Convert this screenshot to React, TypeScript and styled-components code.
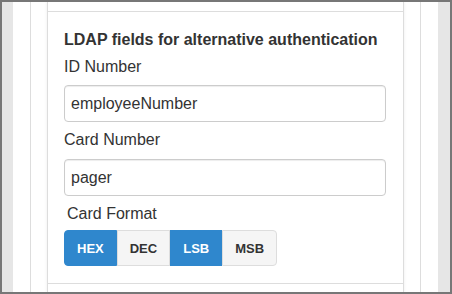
import React from 'react';
import styled, { createGlobalStyle } from 'styled-components';

const GlobalStyle = createGlobalStyle`
  html, body {
    margin: 0;
    padding: 0;
    background: #ffffff;
  }
  body {
    font-family: 'Liberation Sans', Arial, sans-serif;
    color: #333333;
  }
`;

const Frame = styled.div`
  box-sizing: border-box;
  width: 452px;
  height: 294px;
  border: 2px solid #777777;
  overflow: hidden;
  display: flex;
`;

const Shell = styled.div`
  flex: 1;
  display: flex;
  padding: 0 12px 0 11px;
  background: #e6e6e6;
`;

const Page = styled.div`
  flex: 1;
  display: flex;
  padding: 0 17px;
  background: #ffffff;
`;

const Rail = styled.div`
  flex: 1;
  display: flex;
  padding: 0 16px;
  border-left: 1px solid #dddddd;
  border-right: 1px solid #dddddd;
`;

const Panel = styled.div`
  flex: 1;
  display: flex;
  flex-direction: column;
  border-left: 1px solid #dddddd;
  border-right: 1px solid #dddddd;
  box-shadow: 0 0 3px rgba(0, 0, 0, 0.08);
  background: #ffffff;
`;

const Item = styled.section<{ $height?: number }>`
  flex-shrink: 0;
  height: ${(p) => (p.$height ? `${p.$height}px` : 'auto')};
  border-top: 1px solid #dddddd;
  &:first-child {
    border-top: none;
  }
`;

const Body = styled.div`
  padding: 18px 17px 17px 16px;
  display: flex;
  flex-direction: column;
`;

const Heading = styled.h4`
  margin: 0;
  font-size: 16px;
  line-height: 20px;
  font-weight: bold;
  color: #333333;
`;

const Label = styled.label<{ $indent?: number; $top: number }>`
  display: block;
  margin: ${(p) => p.$top}px 0 0 ${(p) => p.$indent ?? 0}px;
  font-size: 16px;
  line-height: 20px;
  color: #333333;
`;

const Field = styled.input<{ $top: number }>`
  box-sizing: border-box;
  width: 100%;
  height: 37px;
  margin-top: ${(p) => p.$top}px;
  padding: 0 6px;
  border: 1px solid #cccccc;
  border-radius: 4px;
  box-shadow: inset 0 1px 1px rgba(0, 0, 0, 0.075);
  font-family: 'Liberation Sans', Arial, sans-serif;
  font-size: 16px;
  color: #333333;
  background: #ffffff;
  outline: none;
`;

const Group = styled.div`
  display: flex;
  margin-top: 6px;
`;

const Toggle = styled.button<{ $active?: boolean }>`
  height: 36px;
  padding: 0 12px;
  margin: 0;
  font-family: 'Liberation Sans', Arial, sans-serif;
  font-size: 13px;
  font-weight: bold;
  border: 1px solid ${(p) => (p.$active ? '#2f87cd' : '#dddddd')};
  background: ${(p) => (p.$active ? '#2f87cd' : '#f5f5f5')};
  color: ${(p) => (p.$active ? '#ffffff' : '#333333')};
  border-radius: 0;
  &:first-child {
    border-radius: 4px 0 0 4px;
  }
  &:last-child {
    border-radius: 0 4px 4px 0;
  }
`;

const formats = [
  { name: 'HEX', active: true },
  { name: 'DEC', active: false },
  { name: 'LSB', active: true },
  { name: 'MSB', active: false },
];

const App: React.FC = () => {
  return (
    <>
      <GlobalStyle />
      <Frame>
        <Shell>
          <Page>
            <Rail>
              <Panel>
                <Item $height={9} />
                <Item>
                  <Body>
                    <Heading>LDAP fields for alternative authentication</Heading>
                    <Label $top={7}>ID Number</Label>
                    <Field $top={8} defaultValue="employeeNumber" />
                    <Label $top={8}>Card Number</Label>
                    <Field $top={9} defaultValue="pager" />
                    <Label $top={8} $indent={3}>
                      Card Format
                    </Label>
                    <Group>
                      {formats.map((f) => (
                        <Toggle key={f.name} type="button" $active={f.active}>
                          {f.name}
                        </Toggle>
                      ))}
                    </Group>
                  </Body>
                </Item>
                <Item $height={20} />
              </Panel>
            </Rail>
          </Page>
        </Shell>
      </Frame>
    </>
  );
};

export default App;
